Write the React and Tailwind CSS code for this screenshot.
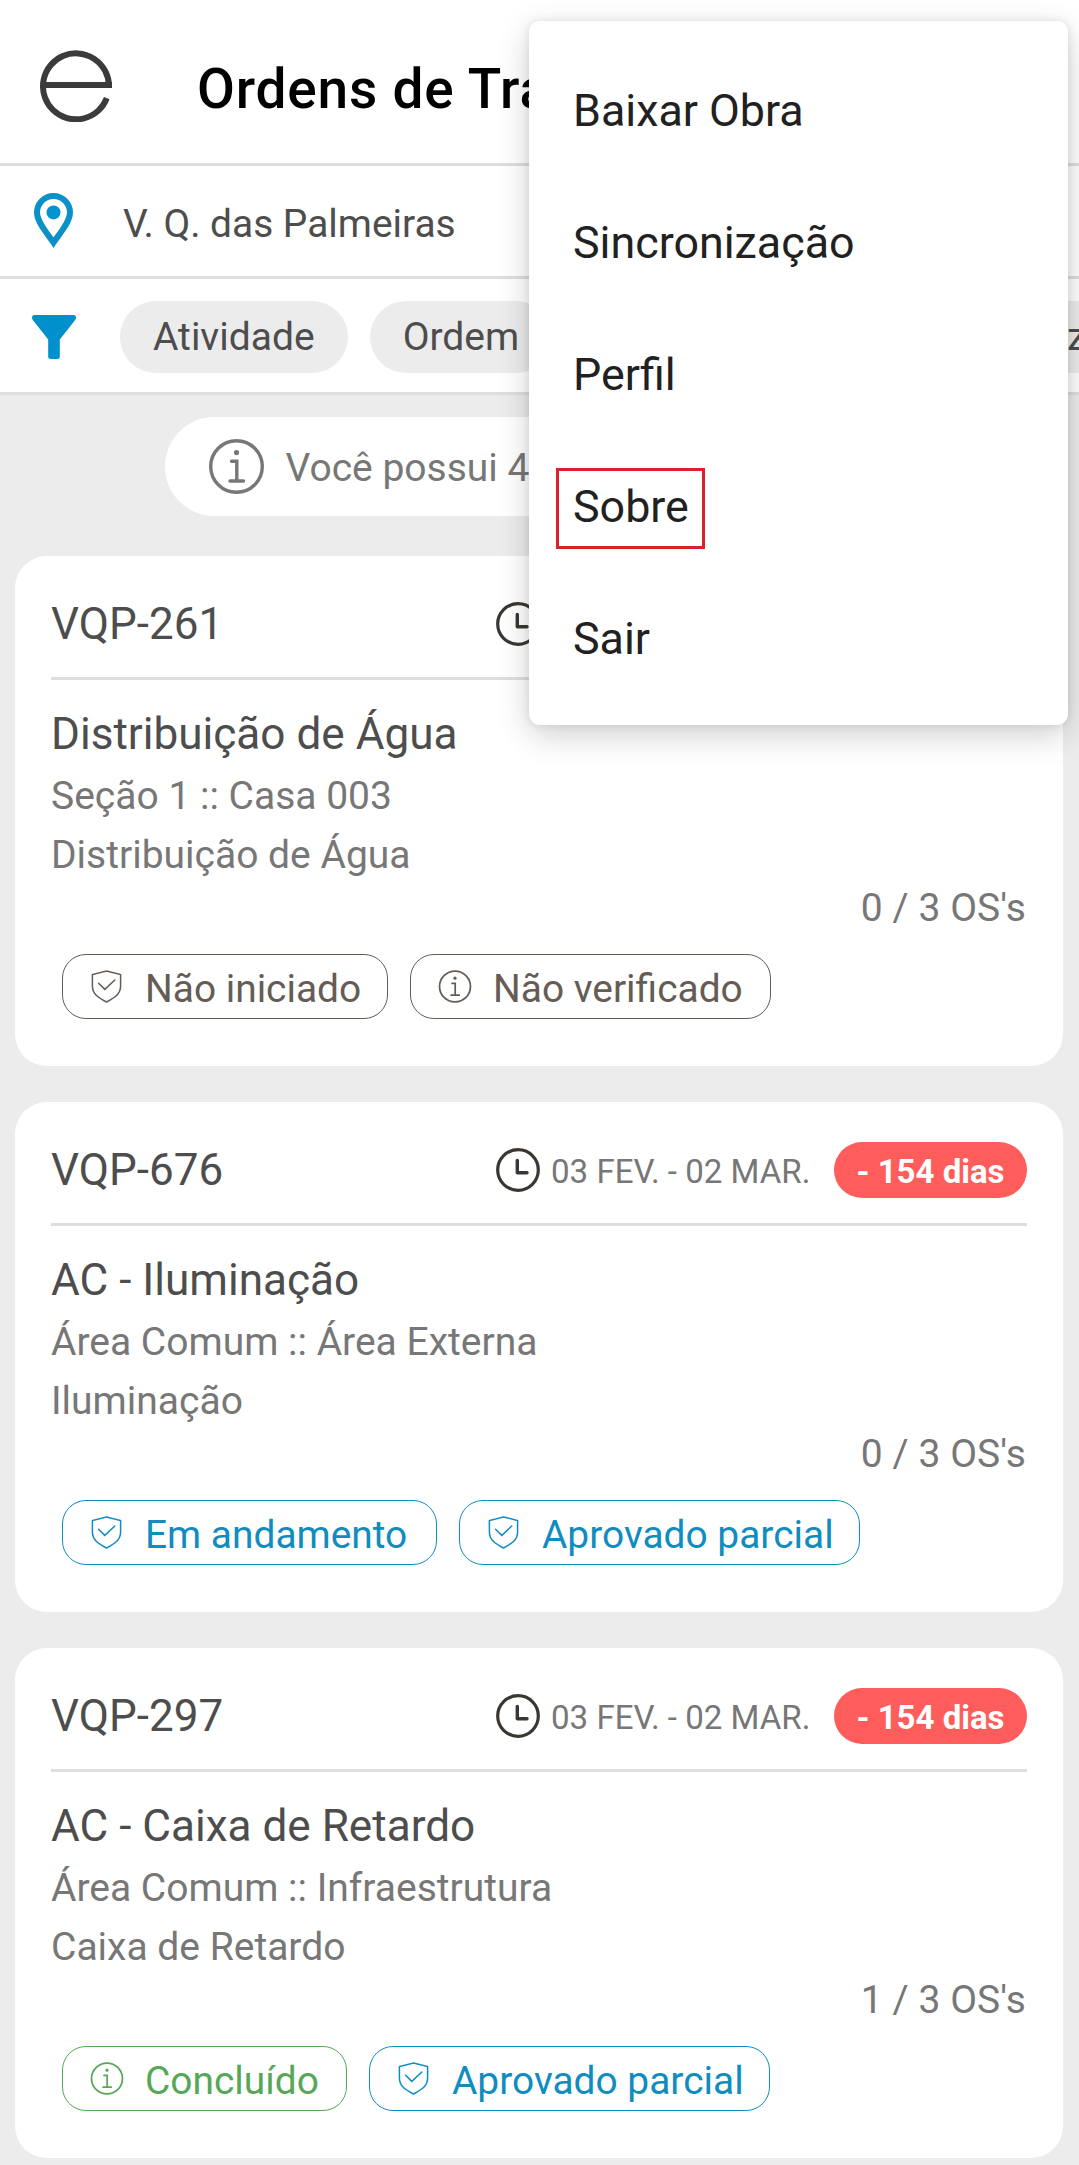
const MENU = ["Baixar Obra", "Sincronização", "Perfil", "Sobre", "Sair"];

const ORDERS = [
  {
    code: "VQP-261",
    title: "Distribuição de Água",
    place: "Seção 1 :: Casa 003",
    service: "Distribuição de Água",
    count: "0 / 3 OS's",
    tags: [
      { label: "Não iniciado", icon: "shield", className: "w-[326px] text-[#655c55]" },
      { label: "Não verificado", icon: "info", className: "w-[361px] text-[#655c55]" },
    ],
  },
  {
    code: "VQP-676",
    title: "AC - Iluminação",
    place: "Área Comum :: Área Externa",
    service: "Iluminação",
    count: "0 / 3 OS's",
    tags: [
      { label: "Em andamento", icon: "shield", className: "w-[375px] text-[#108cc0]" },
      { label: "Aprovado parcial", icon: "shield", className: "w-[401px] text-[#108cc0]" },
    ],
  },
  {
    code: "VQP-297",
    title: "AC - Caixa de Retardo",
    place: "Área Comum :: Infraestrutura",
    service: "Caixa de Retardo",
    count: "1 / 3 OS's",
    tags: [
      { label: "Concluído", icon: "info", className: "w-[285px] text-[#56a757]" },
      { label: "Aprovado parcial", icon: "shield", className: "w-[401px] text-[#108cc0]" },
    ],
  },
];

function Logo() {
  return (
    <svg className="mb-[6px] size-[72px] shrink-0" viewBox="0 0 72 72" fill="none" stroke="#3b3b3b" strokeWidth="6">
      <path d="M3 35H72M69 38V36A33 33 0 1 0 66.8 48.2" />
    </svg>
  );
}

function PinIcon() {
  return (
    <svg className="h-[56px] w-[39px] shrink-0" viewBox="0 0 39 56" fill="none">
      <path
        d="M19.5 49.5C14.5 42 3 29.5 3 19.5A16.5 16.5 0 0 1 36 19.5C36 29.5 24.5 42 19.5 49.5Z"
        stroke="#0b90c8"
        strokeWidth="6"
      />
      <circle cx="19.5" cy="19.4" r="7" fill="#0094d4" />
    </svg>
  );
}

function FunnelIcon() {
  return (
    <svg className="size-[44px] shrink-0" viewBox="0 0 44 44" fill="#0090cc">
      <path d="M2.5 0H41.5Q44 0 44 2.8Q44 4 43 5.3L27.8 24.5V41.5Q27.8 44 25.3 44H18.7Q16.2 44 16.2 41.5V24.5L1 5.3Q0 4 0 2.8Q0 0 2.5 0Z" />
    </svg>
  );
}

function InfoIcon({ className, stroke }) {
  return (
    <svg className={className} viewBox="0 0 55 55" fill="none" stroke="currentColor" strokeWidth={stroke}>
      <circle cx="27.5" cy="27.5" r="25.8" />
      <path d="M22.5 22.3H27.8V42M21 42H34.5" strokeLinecap="round" />
      <circle cx="27.5" cy="13.6" r="2.6" fill="currentColor" stroke="none" />
    </svg>
  );
}

function ShieldIcon() {
  return (
    <svg className="h-[33px] w-[34px] shrink-0" viewBox="0 0 34 33" fill="none" stroke="currentColor" strokeWidth="1.5">
      <path d="M16.5 0.9L30.6 4.5V16C30.6 24 25 27.5 16.5 32C8 27.5 2.4 24 2.4 16V4.5Z" />
      <path d="M8.6 13.2L14.8 19.4L24.8 10" strokeLinecap="round" />
    </svg>
  );
}

function ClockIcon() {
  return (
    <svg className="size-[44px] shrink-0" viewBox="0 0 44 44" fill="none" stroke="#3a3632" strokeWidth="3.2">
      <circle cx="22" cy="22" r="20.3" />
      <path d="M21.3 12.5V24.8H31" strokeLinecap="round" strokeLinejoin="round" strokeWidth="3.4" />
    </svg>
  );
}

function Tag({ label, icon, className }) {
  return (
    <div className={`flex h-[65px] items-center rounded-[24px] border border-current pl-[27px] whitespace-nowrap ${className}`}>
      {icon === "shield" ? <ShieldIcon /> : <InfoIcon className="h-[33px] w-[34px] shrink-0" stroke="2.9" />}
      <span className="ml-[21px] pt-1 text-[38.9px] leading-[50px]">{label}</span>
    </div>
  );
}

function OrderCard({ order }) {
  return (
    <article className="h-[510px] rounded-[32px] bg-white px-9">
      <header className="flex h-[124px] items-start border-b-[3px] border-[#dedede] pt-10">
        <h2 className="flex-1 text-[44px] leading-[56px] text-[#4d4d4d]">{order.code}</h2>
        <div className="flex h-[56px] items-center">
          <ClockIcon />
          <span className="ml-[11px] w-[259px] pt-[3px] text-[33.1px] leading-[44px] whitespace-nowrap text-[#777777]">
            03 FEV. - 02 MAR.
          </span>
          <span className="ml-6 flex h-[56px] w-[193px] items-center justify-center rounded-full bg-[#ff5c5c] pt-[3px] text-[33px] leading-[44px] font-bold text-white">
            - 154 dias
          </span>
        </div>
      </header>
      <h3 className="mt-[23px] text-[44.1px] leading-[62px] text-[#4d4d4d]">{order.title}</h3>
      <p className="mt-[2px] text-[39px] leading-[59px] text-[#777777]">{order.place}</p>
      <p className="text-[39px] leading-[59px] text-[#777777]">{order.service}</p>
      <p className="pr-px text-right text-[39px] leading-[47px] tracking-[0.1px] text-[#777777]">{order.count}</p>
      <div className="mt-[22px] ml-[11px] flex gap-[22px]">
        {order.tags.map((tag) => (
          <Tag key={tag.label} {...tag} />
        ))}
      </div>
    </article>
  );
}

function OptionsMenu() {
  return (
    <nav className="absolute top-[21px] left-[529px] h-[704px] w-[539px] rounded-[11px] bg-white pt-6 pl-11 shadow-[0_0_8px_rgba(0,0,0,0.09),0_10px_32px_rgba(0,0,0,0.19)]">
      <ul className="text-[44.8px] leading-[132px] text-[#212121]">
        {MENU.map((item) => (
          <li key={item} className="flex h-[132px]">
            <span className="relative">
              {item}
              {item === "Sobre" && (
                <span className="absolute top-[27px] bottom-[24px] left-[-17px] w-[149px] border-[3px] border-[#d8232f]" />
              )}
            </span>
          </li>
        ))}
      </ul>
    </nav>
  );
}

function FilterChip({ label, className = "" }) {
  return (
    <span
      className={`flex h-[72px] shrink-0 items-center rounded-full bg-[#ececec] px-[33px] text-[39px] leading-[50px] text-[#4d4d4d] ${className}`}
    >
      {label}
    </span>
  );
}

export default function App() {
  return (
    <div className="relative h-[2165px] w-[1079px] overflow-hidden bg-[#ececec] font-['Roboto',sans-serif]">
      <header className="flex h-[166px] items-center border-b-[3px] border-[#dedede] bg-white pt-[15px] pl-10">
        <Logo />
        <h1 className="ml-[85px] text-[55px] leading-[70px] font-medium tracking-[0.8px] whitespace-nowrap text-black">
          Ordens de Trabalho
        </h1>
      </header>

      <div className="flex h-[113px] items-center border-b-[3px] border-[#dedede] bg-white pl-[34px]">
        <PinIcon />
        <span className="ml-[50px] pt-[5px] text-[38.9px] leading-[50px] text-[#4d4d4d]">V. Q. das Palmeiras</span>
      </div>

      <div className="flex h-[116px] items-center overflow-hidden border-b-[3px] border-[#dedede] bg-white pt-[3px] pl-8">
        <FunnelIcon />
        <div className="ml-11 flex gap-[22px]">
          <FilterChip label="Atividade" />
          <FilterChip label="Ordem" />
          <FilterChip label="Localização" className="ml-[356px]" />
        </div>
      </div>

      <main className="pt-[22px] pr-4 pl-[15px]">
        <div className="mx-auto flex h-[99px] w-[749px] items-center rounded-full bg-white pl-11 text-[#777777]">
          <InfoIcon className="size-[55px] shrink-0" stroke="3.4" />
          <span className="ml-[22px] pt-[2px] text-[39px] leading-[50px]">Você possui 4 ordens de trabalho</span>
        </div>
        <div className="mt-10 flex flex-col gap-9">
          {ORDERS.map((order) => (
            <OrderCard key={order.code} order={order} />
          ))}
        </div>
      </main>

      <OptionsMenu />
    </div>
  );
}
